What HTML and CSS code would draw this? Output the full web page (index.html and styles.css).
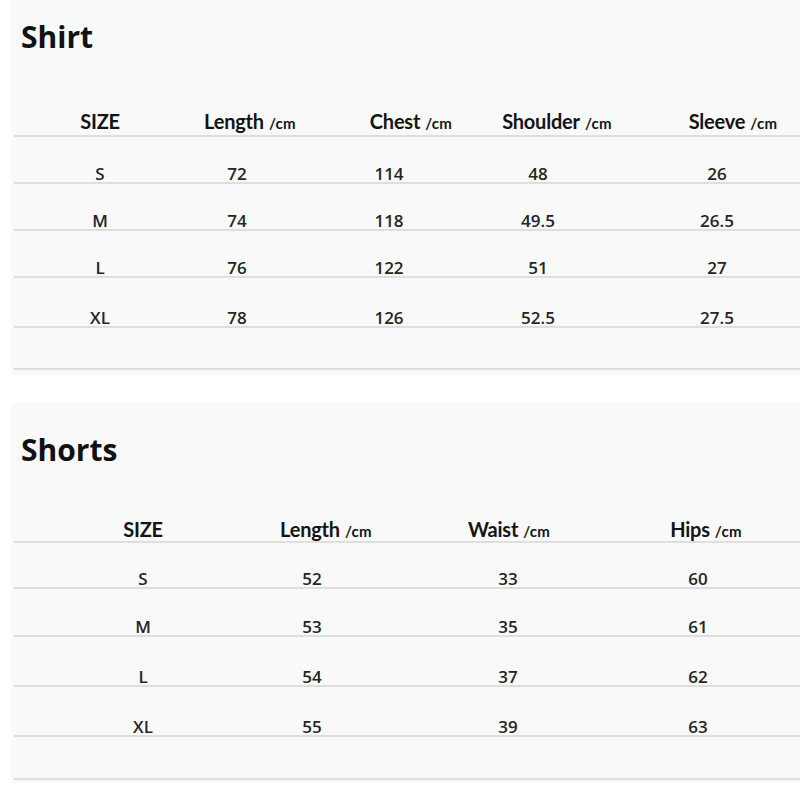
FILE: index.html
```html
<!DOCTYPE html>
<html lang="en">
<head>
<meta charset="utf-8">
<title>Size chart</title>
<link rel="stylesheet" href="styles.css">
</head>
<body>
<section class="panel panel-shirt">
  <h1 class="title">Shirt</h1>
  <div class="chart chart-shirt">
    <div class="row head">
      <div class="cell">SIZE</div>
      <div class="cell hang-23">Length<span class="unit">/cm</span></div>
      <div class="cell hang-41">Chest<span class="unit">/cm</span></div>
      <div class="cell hang-35">Shoulder<span class="unit">/cm</span></div>
      <div class="cell hang-29">Sleeve<span class="unit">/cm</span></div>
    </div>
    <div class="row body"><div class="cell">S</div><div class="cell">72</div><div class="cell">114</div><div class="cell">48</div><div class="cell">26</div></div>
    <div class="row body"><div class="cell">M</div><div class="cell">74</div><div class="cell">118</div><div class="cell">49.5</div><div class="cell">26.5</div></div>
    <div class="row body"><div class="cell">L</div><div class="cell">76</div><div class="cell">122</div><div class="cell">51</div><div class="cell">27</div></div>
    <div class="row body row-tall"><div class="cell">XL</div><div class="cell">78</div><div class="cell">126</div><div class="cell">52.5</div><div class="cell">27.5</div></div>
    <div class="row empty"></div>
  </div>
</section>

<section class="panel panel-shorts">
  <h1 class="title">Shorts</h1>
  <div class="chart chart-shorts">
    <div class="row head">
      <div class="cell">SIZE</div>
      <div class="cell hang-25">Length<span class="unit">/cm</span></div>
      <div class="cell hang-0">Waist<span class="unit">/cm</span></div>
      <div class="cell hang-13">Hips<span class="unit">/cm</span></div>
    </div>
    <div class="row body row-short"><div class="cell">S</div><div class="cell">52</div><div class="cell">33</div><div class="cell">60</div></div>
    <div class="row body"><div class="cell">M</div><div class="cell">53</div><div class="cell">35</div><div class="cell">61</div></div>
    <div class="row body row-tall"><div class="cell">L</div><div class="cell">54</div><div class="cell">37</div><div class="cell">62</div></div>
    <div class="row body row-tall"><div class="cell">XL</div><div class="cell">55</div><div class="cell">39</div><div class="cell">63</div></div>
    <div class="row empty"></div>
  </div>
</section>
</body>
</html>
```

FILE: styles.css
```css
* { box-sizing: border-box; }

html, body {
  margin: 0;
  padding: 0;
  background: #ffffff;
}

body {
  padding-left: 11px;
  width: 800px;
  font-family: "Open Sans", "Noto Sans", sans-serif;
  color: #1a1a1a;
}

.panel {
  background: #f9f9f9;
  width: 789px;
}

.panel-shirt {
  padding: 17px 0 5px 0;
}

.panel-shorts {
  margin-top: 27px;
  padding: 28px 0 3px 0;
}

.title {
  margin: 0 0 0 10px;
  font-family: "Open Sans", "Noto Sans", sans-serif;
  font-weight: 700;
  font-size: 30px;
  line-height: 40px;
  color: #111;
}

.chart {
  margin-left: 3px;
}

.chart-shirt { margin-top: 52px; }
.chart-shorts { margin-top: 47px; }

.row {
  display: grid;
  align-items: end;
  border-bottom: 2px solid #dedede;
}

.chart-shirt .row {
  padding-left: 48px;
  grid-template-columns: 76px 198px 106px 192px 166px;
}

.chart-shorts .row {
  padding-left: 68px;
  grid-template-columns: 122px 216px 176px 204px;
}

.cell {
  text-align: center;
  white-space: nowrap;
}

.head .cell {
  font-family: "Lato", "Noto Sans", sans-serif;
  font-weight: 700;
  font-size: 20px;
  line-height: 24px;
  height: 24px;
  color: #141414;
  letter-spacing: -0.2px;
}

.chart-shirt .head { padding-bottom: 2px; }

.unit {
  display: inline-block;
  margin-left: 5px;
  width: 25px;
  text-align: left;
  font-size: 15px;
  line-height: 15px;
  font-weight: 700;
  letter-spacing: 0.3px;
  vertical-align: baseline;
  margin-right: var(--hang, -30px);
}

.hang-0 { --hang: 0px; }
.hang-13 { --hang: -14px; }
.hang-23 { --hang: -24px; }
.hang-25 { --hang: -26px; }
.hang-29 { --hang: -30px; }
.hang-35 { --hang: -36px; }
.hang-41 { --hang: -42px; }

.body .cell {
  font-family: "Open Sans", "Noto Sans", sans-serif;
  font-weight: 600;
  font-size: 17px;
  line-height: 17px;
  color: #252525;
}

.chart-shirt .body { height: 47px; }
.chart-shirt .body.row-tall { height: 50px; }
.chart-shirt .empty { height: 42px; }

.chart-shorts .body { height: 48px; }
.chart-shorts .body.row-short { height: 46px; }
.chart-shorts .body.row-tall { height: 50px; }
.chart-shorts .empty { height: 43px; }
```
